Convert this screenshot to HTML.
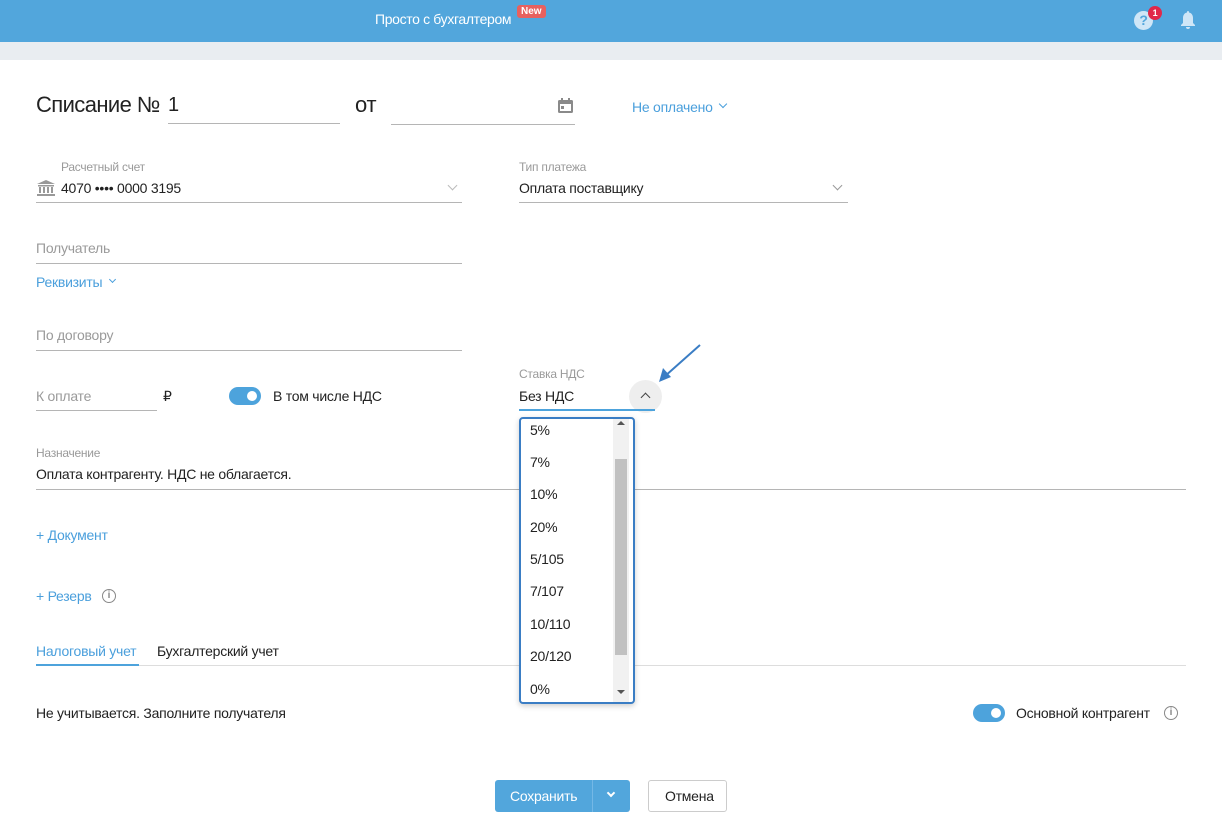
<!DOCTYPE html>
<html><head><meta charset="utf-8"><style>
*{margin:0;padding:0;box-sizing:border-box}
body{width:1222px;height:819px;position:relative;overflow:hidden;background:#fff;font-family:"Liberation Sans",sans-serif;font-size:14px;color:#222;letter-spacing:-0.25px}
.a{position:absolute;white-space:nowrap}
.l{position:absolute;height:1px;background:#b5b5b5}
.lbl{color:#9a9a9a;font-size:12px}
.ph{color:#9a9a9a}
.blue{color:#4a9fdc}
.chev{position:absolute;width:7px;height:7px;border-right:1.5px solid #999;border-bottom:1.5px solid #999;transform:rotate(45deg)}
.tog{position:absolute;width:32px;height:18px;border-radius:9px;background:#4da3dc}
.tog:after{content:"";position:absolute;right:4px;top:4px;width:10px;height:10px;border-radius:50%;background:#fff}
.info{position:absolute;width:14px;height:14px;border:1.3px solid #888;border-radius:50%;font-size:10px;color:#888;text-align:center;line-height:12px;font-weight:bold;letter-spacing:0}
</style></head><body>
<div class="a" style="left:0;top:0;width:1222px;height:42px;background:#52a6dc"></div>
<div class="a" style="left:0;top:42px;width:1222px;height:18px;background:#e9edf1"></div>
<div class="a" style="left:375px;top:11px;color:#fff;font-size:14px;letter-spacing:-0.35px">Просто с бухгалтером</div>
<div class="a" style="left:517px;top:5px;background:#e8615f;color:#fff;font-size:10px;font-weight:bold;padding:1px 4px;border-radius:3px;letter-spacing:0">New</div>
<div class="a" style="left:1134px;top:11px;width:19px;height:19px;border-radius:50%;background:#cfe6f7;color:#52a6dc;font-weight:bold;font-size:14px;text-align:center;line-height:19px">?</div>
<div class="a" style="left:1148px;top:6px;width:14px;height:14px;border-radius:50%;background:#e0284a;color:#fff;font-size:9px;font-weight:bold;text-align:center;line-height:14px">1</div>
<svg class="a" style="left:1179px;top:10px" width="18" height="20" viewBox="0 0 18 20"><path d="M9 1c1 0 1 1 1 1.5C12.5 3 14 5 14 8v5l2 2v1H2v-1l2-2V8c0-3 1.5-5 4-5.5C8 2 8 1 9 1z M7 17h4a2 2 0 0 1-4 0z" fill="#cfe6f7"/></svg>

<div class="a" style="left:36px;top:92px;font-size:22px;color:#222;letter-spacing:-0.6px">Списание №</div>
<div class="a" style="left:168px;top:94px;font-size:20px">1</div>
<div class="l" style="left:168px;top:123px;width:172px"></div>
<div class="a" style="left:355px;top:92px;font-size:22px">от</div>
<div class="l" style="left:391px;top:124px;width:184px"></div>
<svg class="a" style="left:557px;top:97px" width="17" height="17" viewBox="0 0 17 17"><rect x="1" y="3" width="15" height="13" rx="1.5" fill="#8a8a8a"/><rect x="3" y="7" width="11" height="7" fill="#fff"/><rect x="4" y="9" width="3" height="3" fill="#8a8a8a"/><rect x="4" y="1" width="2" height="3" fill="#8a8a8a"/><rect x="11" y="1" width="2" height="3" fill="#8a8a8a"/></svg>
<div class="a blue" style="left:632px;top:99px">Не оплачено</div>
<div class="chev" style="left:720px;top:101px;width:6px;height:6px;border-color:#4a9fdc"></div>

<div class="a lbl" style="left:61px;top:160px">Расчетный счет</div>
<svg class="a" style="left:36px;top:180px" width="20" height="16" viewBox="0 0 20 16"><path d="M10 0L19 4H1z" fill="#999"/><rect x="2" y="5" width="16" height="1.5" fill="#999"/><rect x="3" y="7" width="2" height="6" fill="#999"/><rect x="7" y="7" width="2" height="6" fill="#999"/><rect x="11" y="7" width="2" height="6" fill="#999"/><rect x="15" y="7" width="2" height="6" fill="#999"/><rect x="1" y="14" width="18" height="2" fill="#999"/></svg>
<div class="a" style="left:61px;top:180px">4070 •••• 0000 3195</div>
<div class="chev" style="left:449px;top:182px;border-color:#bbb"></div>
<div class="l" style="left:36px;top:202px;width:426px"></div>

<div class="a lbl" style="left:519px;top:160px">Тип платежа</div>
<div class="a" style="left:519px;top:180px">Оплата поставщику</div>
<div class="chev" style="left:834px;top:182px"></div>
<div class="l" style="left:519px;top:202px;width:329px"></div>

<div class="a ph" style="left:36px;top:240px">Получатель</div>
<div class="l" style="left:36px;top:263px;width:426px"></div>
<div class="a blue" style="left:36px;top:274px">Реквизиты</div>
<div class="chev" style="left:110px;top:277px;width:5px;height:5px;border-color:#4a9fdc"></div>

<div class="a ph" style="left:36px;top:327px">По договору</div>
<div class="l" style="left:36px;top:350px;width:426px"></div>

<div class="a ph" style="left:36px;top:388px">К оплате</div>
<div class="l" style="left:36px;top:410px;width:121px"></div>
<div class="a" style="left:163px;top:388px">₽</div>
<div class="tog" style="left:229px;top:387px"></div>
<div class="a" style="left:273px;top:388px">В том числе НДС</div>

<div class="a lbl" style="left:519px;top:367px">Ставка НДС</div>
<div class="a" style="left:519px;top:388px">Без НДС</div>
<div class="a" style="left:629px;top:380px;width:33px;height:33px;border-radius:50%;background:#eee"></div>
<div class="chev" style="left:642px;top:394px;transform:rotate(-135deg);border-color:#444"></div>
<div class="a" style="left:519px;top:409px;width:136px;height:2px;background:#4da3dc"></div>
<svg class="a" style="left:655px;top:343px" width="50" height="42" viewBox="0 0 50 42"><line x1="45" y1="2" x2="9" y2="34" stroke="#3a7dc4" stroke-width="2"/><path d="M4 39L8 25L16 34z" fill="#3a7dc4"/></svg>

<div class="a lbl" style="left:36px;top:446px">Назначение</div>
<div class="a" style="left:36px;top:466px">Оплата контрагенту. НДС не облагается.</div>
<div class="l" style="left:36px;top:489px;width:1150px"></div>

<div class="a blue" style="left:36px;top:527px">+ Документ</div>
<div class="a blue" style="left:36px;top:588px">+ Резерв</div>
<div class="info" style="left:102px;top:589px">i</div>

<div class="a blue" style="left:36px;top:643px">Налоговый учет</div>
<div class="a" style="left:157px;top:643px">Бухгалтерский учет</div>
<div class="l" style="left:36px;top:665px;width:1150px;background:#ddd"></div>
<div class="a" style="left:36px;top:664px;width:103px;height:2px;background:#4da3dc"></div>

<div class="a" style="left:36px;top:705px">Не учитывается. Заполните получателя</div>
<div class="tog" style="left:973px;top:704px"></div>
<div class="a" style="left:1016px;top:705px">Основной контрагент</div>
<div class="info" style="left:1164px;top:706px">i</div>

<div class="a" style="left:519px;top:417px;width:116px;height:287px;border:2px solid #3a7dc4;border-radius:4px;background:#fff;box-shadow:0 2px 6px rgba(0,0,0,.2)"></div>
<div class="a" style="left:613px;top:419px;width:16px;height:283px;background:#f1f1f1"></div>
<div class="a" style="left:615px;top:459px;width:12px;height:196px;background:#c1c1c1"></div>
<div class="a" style="left:617px;top:421px;border:4px solid transparent;border-bottom:4px solid #555;border-top:0"></div>
<div class="a" style="left:617px;top:690px;border:4px solid transparent;border-top:4px solid #555;border-bottom:0"></div>
<div class="a" style="left:530px;top:422px">5%</div>
<div class="a" style="left:530px;top:454px">7%</div>
<div class="a" style="left:530px;top:486px">10%</div>
<div class="a" style="left:530px;top:519px">20%</div>
<div class="a" style="left:530px;top:551px">5/105</div>
<div class="a" style="left:530px;top:583px">7/107</div>
<div class="a" style="left:530px;top:616px">10/110</div>
<div class="a" style="left:530px;top:648px">20/120</div>
<div class="a" style="left:530px;top:681px">0%</div>

<div class="a" style="left:495px;top:780px;width:135px;height:32px;border-radius:3px;background:#52a6dc"></div>
<div class="a" style="left:592px;top:780px;width:1px;height:32px;background:#74b8e6"></div>
<div class="a" style="left:510px;top:788px;color:#fff">Сохранить</div>
<div class="chev" style="left:608px;top:790px;border-color:#fff;border-width:2px;width:6px;height:6px"></div>
<div class="a" style="left:648px;top:780px;width:79px;height:32px;border:1px solid #ccc;border-radius:3px"></div>
<div class="a" style="left:665px;top:788px">Отмена</div>
</body></html>
